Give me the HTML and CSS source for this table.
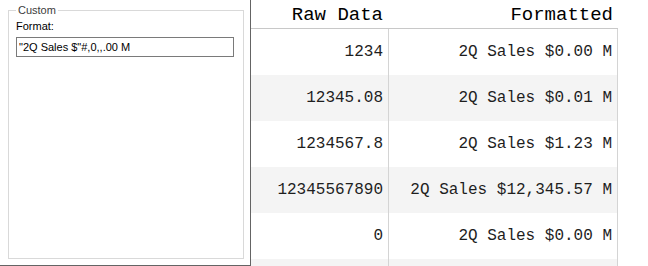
FILE: index.html
```html
<!DOCTYPE html>
<html>
<head>
<link rel="stylesheet" href="styles.css">
    <title>Number Format</title>
</head>
<body>
    <div class="sheet">
        <div class="row head">
            <div class="cell">Raw Data</div>
            <div class="cell">Formatted</div>
        </div>
        <div class="row">
            <div class="cell">1234</div>
            <div class="cell fmt">2Q Sales $0.00 M</div>
        </div>
        <div class="row alt">
            <div class="cell">12345.08</div>
            <div class="cell fmt">2Q Sales $0.01 M</div>
        </div>
        <div class="row">
            <div class="cell">1234567.8</div>
            <div class="cell fmt">2Q Sales $1.23 M</div>
        </div>
        <div class="row alt">
            <div class="cell">12345567890</div>
            <div class="cell fmt">2Q Sales $12,345.57 M</div>
        </div>
        <div class="row">
            <div class="cell">0</div>
            <div class="cell fmt">2Q Sales $0.00 M</div>
        </div>
        <div class="row alt last">
            <div class="cell"></div>
            <div class="cell fmt"></div>
        </div>
    </div>

    <!-- format picker dropdown, sits over the grid -->
    <div class="popup">
        <fieldset class="group">
            <legend>Custom</legend>
            <label class="label" for="fmt">Format:</label>
            <input class="field" id="fmt" type="text" value="&quot;2Q Sales $&quot;#,0,,.00 M">
        </fieldset>
    </div>
</body>
</html>
```

FILE: styles.css
```css
body {
    margin: 0;
    background: white;
    position: relative;
    height: 266px;
    overflow: hidden;
}

.sheet {
    width: 618px;
    font-family: "Liberation Mono", "DejaVu Sans Mono", monospace;
}

.row {
    display: grid;
    grid-template-columns: 388px 230px;
    height: 46px;
    font-size: 16px;
    color: #1e1e1e;
}

.row .cell {
    display: flex;
    align-items: center;
    justify-content: flex-end;
    padding-right: 5px;
}

.row .fmt {
    border-left: 1px solid #d4d4d4;
    border-right: 1px solid #d4d4d4;
}

.row.alt {
    background: #f4f4f4;
}

/* only the top of the next row shows */
.row.last {
    height: 7px;
}

.row.head {
    height: 28px;
    border-bottom: 1px solid #c8c8c8;
    font-size: 19px;
    color: black;
}

.row.head .cell {
    align-items: flex-end;
    padding-bottom: 3px;
    line-height: 20px;
}

/* Dropdown panel */
.popup {
    position: absolute;
    left: -1px;
    top: -1px;
    width: 250px;
    height: 265px;
    background: white;
    border: 1px solid #646464;
    font-family: "Liberation Sans", Arial, sans-serif;
    font-size: 11px;
}

.group {
    box-sizing: border-box;
    margin: 3px 0 0 8px;
    width: 236px;
    height: 256px;
    padding: 2px 7px;
    border: 1px solid #d9d9d9;
}

.group legend {
    padding: 0 2px;
    line-height: 14px;
    color: #3c3c3c;
}

.label {
    display: block;
    color: black;
    line-height: 14px;
    margin-bottom: 4px;
}

.field {
    display: block;
    box-sizing: border-box;
    width: 218px;
    height: 20px;
    margin: 0;
    padding: 0 2px;
    border: 1px solid #7a7a7a;
    border-radius: 0;
    font-family: "Liberation Sans", Arial, sans-serif;
    font-size: 11px;
    color: black;
    outline: none;
}
```
